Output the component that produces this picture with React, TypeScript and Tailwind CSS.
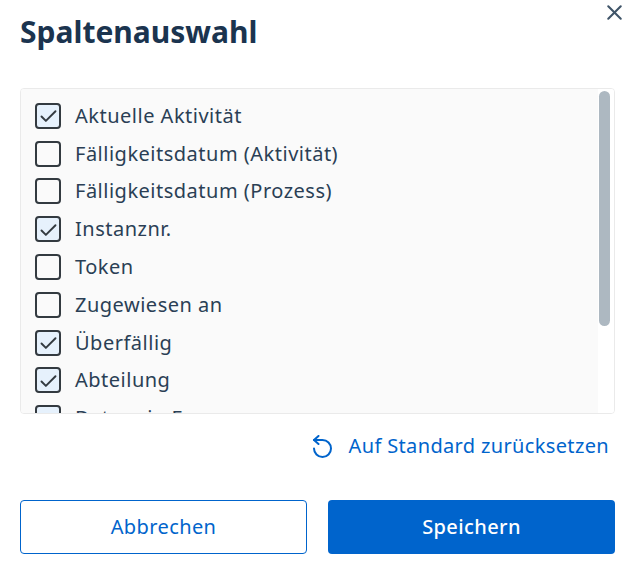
import { X, Check } from 'lucide-react';

const columns = [
  { label: 'Aktuelle Aktivität', checked: true },
  { label: 'Fälligkeitsdatum (Aktivität)', checked: false },
  { label: 'Fälligkeitsdatum (Prozess)', checked: false },
  { label: 'Instanznr.', checked: true },
  { label: 'Token', checked: false },
  { label: 'Zugewiesen an', checked: false },
  { label: 'Überfällig', checked: true },
  { label: 'Abteilung', checked: true },
  { label: 'Datum in Fr', checked: true },
];

function App() {
  return (
    <div className="relative h-[565px] w-[635px] overflow-hidden bg-white px-5 font-['Noto_Sans',sans-serif]">
      <button className="absolute right-[8px] top-0 text-[#3f5468]">
        <X className="h-[25px] w-[25px]" strokeWidth={2} />
      </button>

      <h1 className="h-[88px] pt-[10px] text-[30px] font-bold leading-[44px] text-[#1b344f]">Spaltenauswahl</h1>

      <div className="flex h-[326px] overflow-hidden rounded border border-[#eaeaea]">
        <ul className="flex-1 bg-[#fafafa] px-[14px] pt-[8px]">
          {columns.map(col => (
            <li key={col.label} className="flex h-[37.8px] items-center gap-[14px] text-[20px] tracking-[0.5px] text-[#2a3f55]">
              <span
                className={`flex h-[26px] w-[26px] shrink-0 items-center justify-center rounded-[4px] border-2 border-[#333a40] ${
                  col.checked ? 'bg-[#e6f1fc]' : 'bg-[#fafafa]'
                }`}
              >
                {col.checked && <Check className="mt-[2px] h-[21px] w-[21px] shrink-0 text-[#333a40]" strokeWidth={2.2} />}
              </span>
              <span className="whitespace-nowrap">{col.label}</span>
            </li>
          ))}
        </ul>
        <div className="w-[16px] bg-white pl-[1px] pt-[2px]">
          <div className="h-[235px] w-[11px] rounded-full bg-[#adb8c1]" />
        </div>
      </div>

      <div className="flex h-[64px] items-center justify-end gap-[16px] pr-[6px] text-[20px] tracking-[0.35px] text-[#0064cc]">
        <svg viewBox="0 0 21 24" className="mt-[2px] h-[24px] w-[21px]" fill="none" stroke="currentColor" strokeWidth="2" strokeLinecap="round" strokeLinejoin="round">
          <path d="M2 5H10.5A8.5 8.5 0 1 1 2 13.5" />
          <path d="M6.5 1 2 5l4.5 4" />
        </svg>
        <span>Auf Standard zurücksetzen</span>
      </div>

      <div className="mt-[22px] flex gap-[21px]">
        <button className="h-[54px] w-[287px] rounded border border-[#0064cc] bg-white text-[20px] tracking-[0.4px] text-[#0064cc]">
          Abbrechen
        </button>
        <button className="h-[54px] w-[287px] rounded bg-[#0064cc] text-[20px] font-medium tracking-[0.4px] text-white">
          Speichern
        </button>
      </div>
    </div>
  );
}

export default App;
